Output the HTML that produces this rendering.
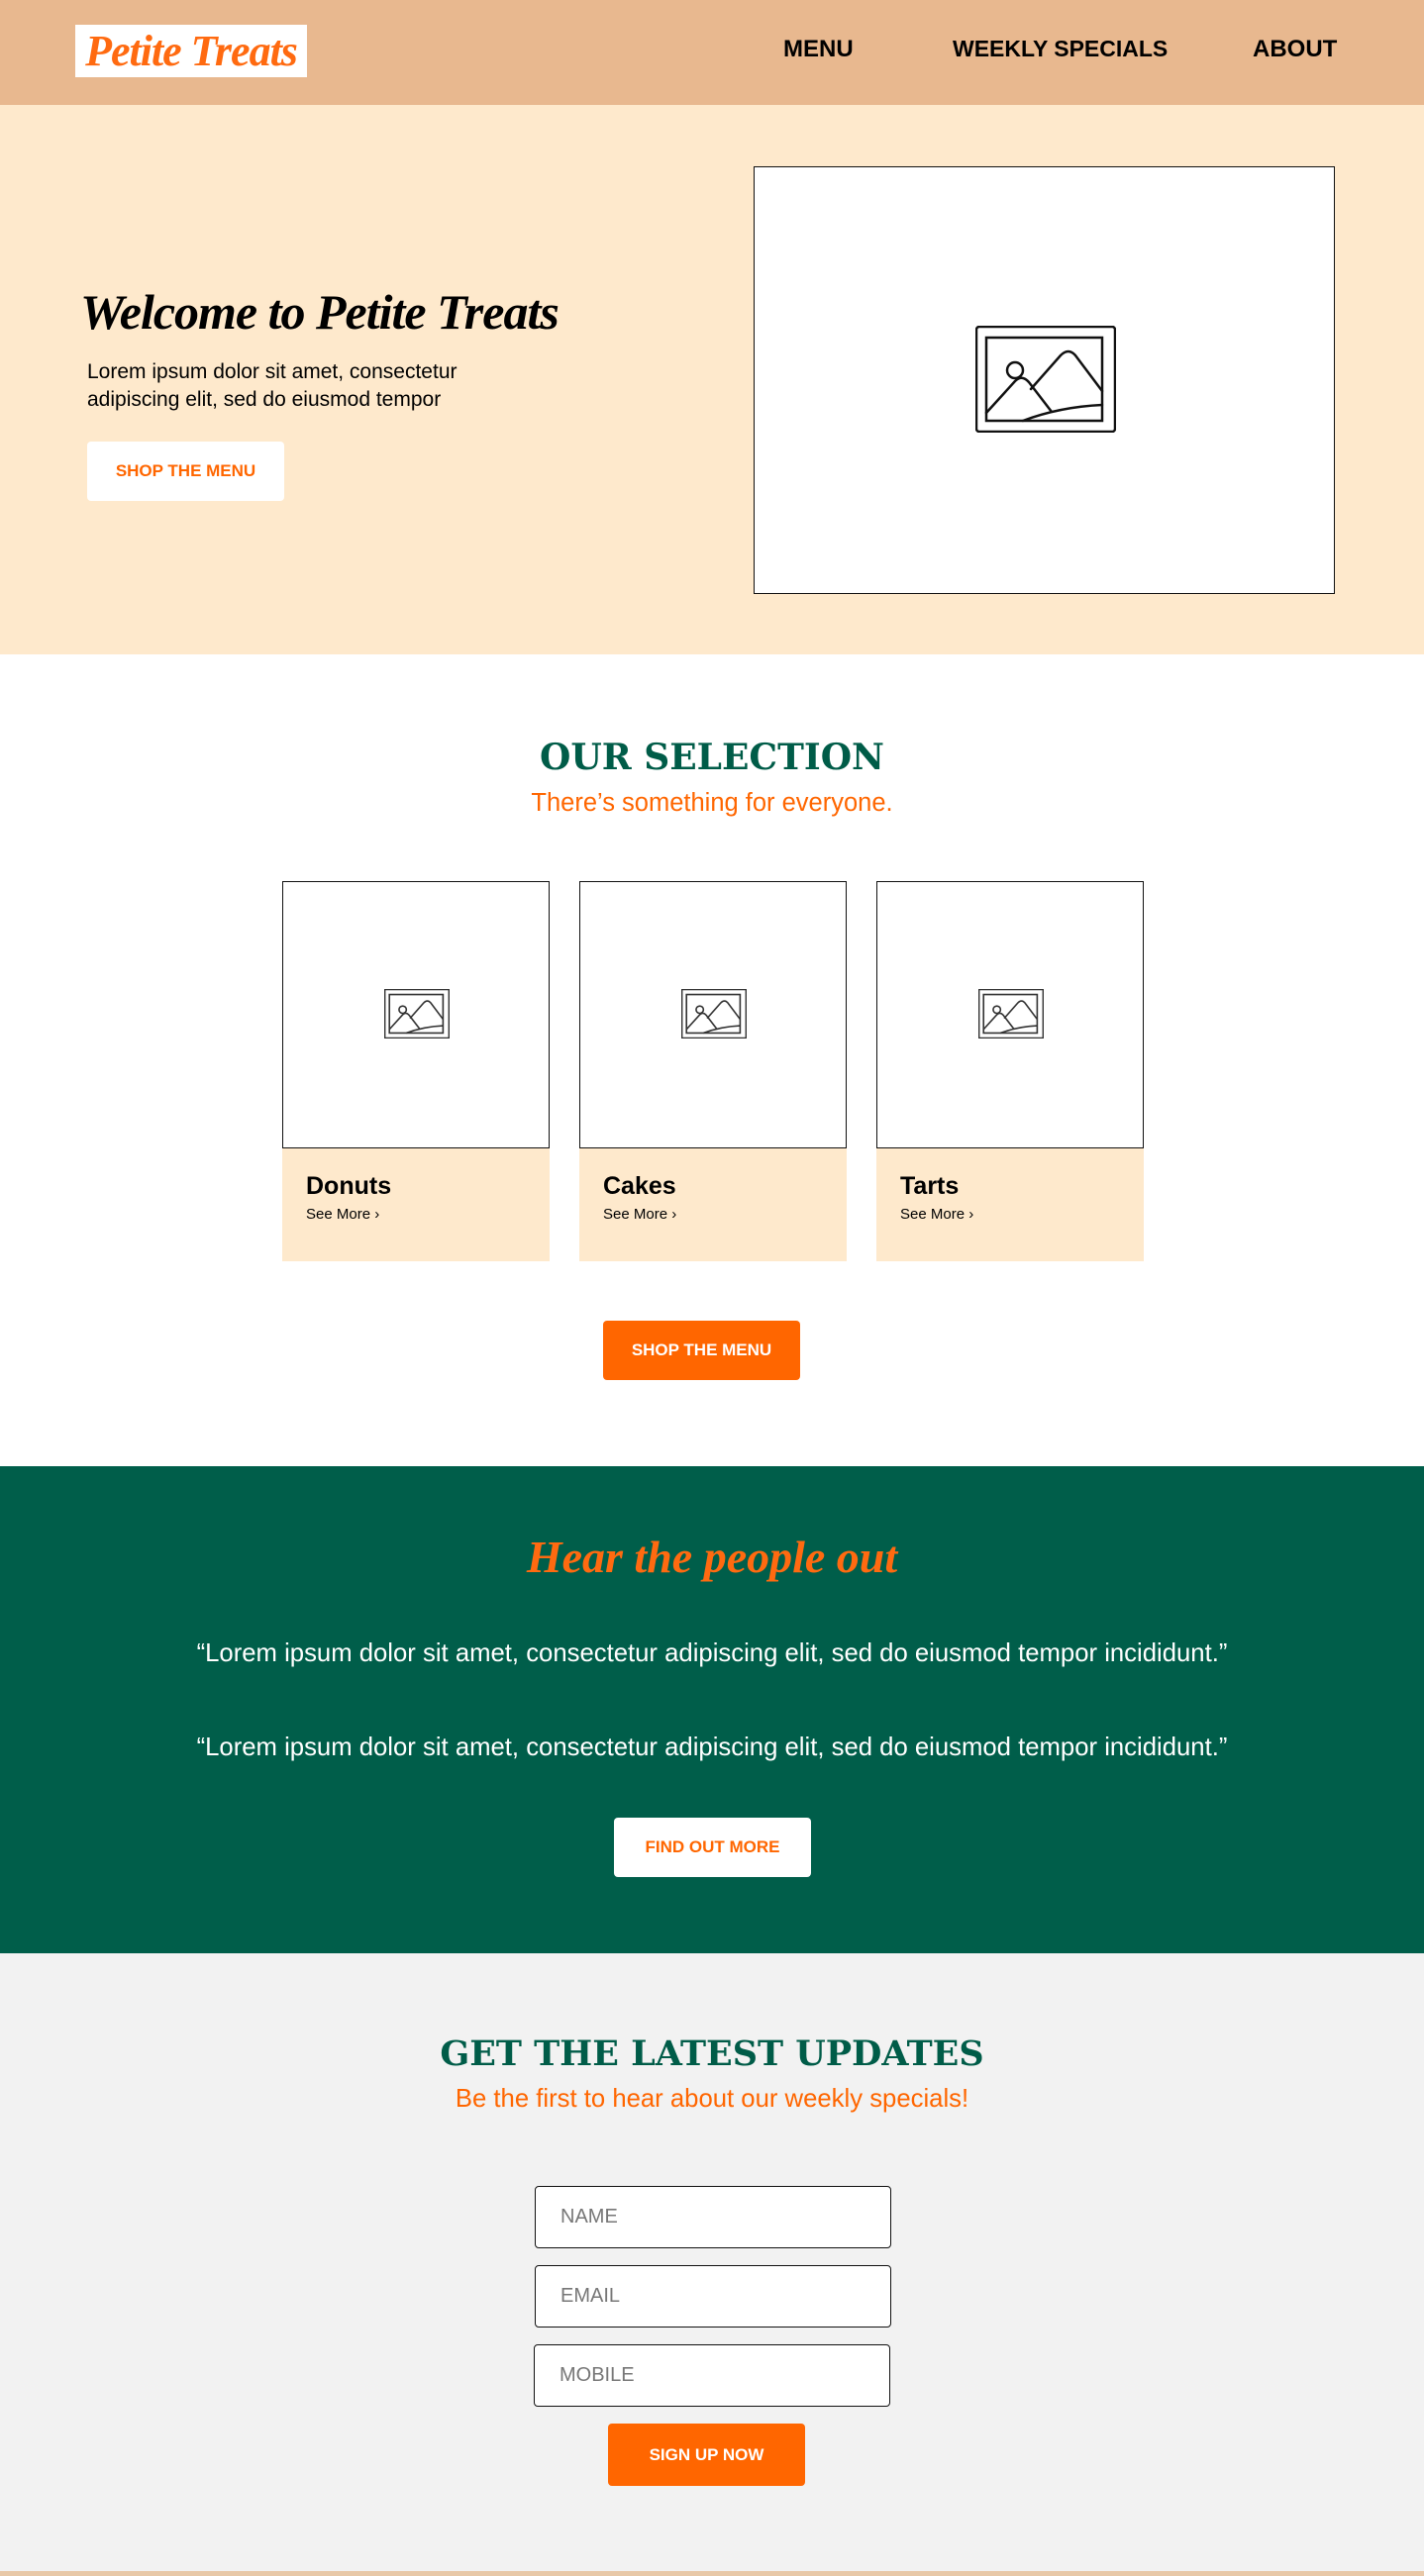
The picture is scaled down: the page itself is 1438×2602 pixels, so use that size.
<!DOCTYPE html>
<html><head><meta charset="utf-8"><style>
*{margin:0;padding:0;box-sizing:border-box}
body{width:1438px;height:2602px;font-family:"Liberation Sans",sans-serif;background:#f2f2f2;position:relative;overflow:hidden}
.a{position:absolute}
.script{font-family:"Liberation Serif",serif;font-style:italic;font-weight:bold}
.slab{font-family:"DejaVu Serif","Liberation Serif",serif;font-weight:bold;color:#005c48;text-align:center;left:0;width:1438px}
.c{text-align:center;left:0;width:1438px}
.btn{position:absolute;border-radius:4px;font-weight:bold;font-size:17px;display:flex;align-items:center;justify-content:center}
.inp{position:absolute;left:540px;width:360px;height:63px;background:#fff;border:1.5px solid #111;border-radius:4px;color:#777;font-size:20px;padding-left:25px;display:flex;align-items:center}
</style></head><body>
<div class="a" style="left:0;top:0;width:1438px;height:106px;background:#e8b88f"></div>
<div class="a script" style="left:76px;top:25px;width:234px;height:53px;background:#fff;color:#ff6a10;font-size:44px;line-height:53px;text-align:center;letter-spacing:-1px">Petite Treats</div>
<div class="a" style="left:791px;top:36px;font-size:24px;font-weight:bold">MENU</div>
<div class="a" style="left:962px;top:36px;font-size:23px;font-weight:bold">WEEKLY SPECIALS</div>
<div class="a" style="left:1265px;top:36px;font-size:24px;font-weight:bold">ABOUT</div>

<div class="a" style="left:0;top:106px;width:1438px;height:555px;background:#fee9cc"></div>
<div class="a script" style="left:81px;top:286px;font-size:50px;letter-spacing:-1px">Welcome to Petite Treats</div>
<div class="a" style="left:88px;top:362px;font-size:21px;line-height:28px">Lorem ipsum dolor sit amet, consectetur<br>adipiscing elit, sed do eiusmod tempor</div>
<div class="btn" style="left:88px;top:446px;width:199px;height:60px;background:#fff;color:#ff6600">SHOP THE MENU</div>
<div class="a" style="left:761px;top:168px;width:587px;height:432px;background:#fff;border:1.5px solid #111"></div>
<svg class="a" style="left:985px;top:329px" width="142" height="108" viewBox="0 0 142 108" fill="none" stroke="#111" stroke-width="2.5" stroke-linecap="round"><rect x="1" y="1" width="140" height="106" rx="3"/><rect x="11" y="12" width="117" height="84"/><circle cx="40" cy="45" r="8"/><path d="M11 88 L40 56 Q47 49 54 57 L77 87 M56 64 L86 30 Q94 22 101 30 L128 66 M48 96 Q85 82 128 80"/></svg>

<div class="a" style="left:0;top:661px;width:1438px;height:820px;background:#fff"></div>
<div class="a slab" style="top:744px;font-size:36px">OUR SELECTION</div>
<div class="a c" style="top:797px;font-size:25.5px;color:#ff6600">There’s something for everyone.</div>

<div class="a" style="left:285px;top:1159px;width:270px;height:115px;background:#fee9cc"></div>
<div class="a" style="left:585px;top:1159px;width:270px;height:115px;background:#fee9cc"></div>
<div class="a" style="left:885px;top:1159px;width:270px;height:115px;background:#fee9cc"></div>
<div class="a" style="left:285px;top:890px;width:270px;height:270px;border:1.5px solid #111;background:#fff"></div>
<div class="a" style="left:585px;top:890px;width:270px;height:270px;border:1.5px solid #111;background:#fff"></div>
<div class="a" style="left:885px;top:890px;width:270px;height:270px;border:1.5px solid #111;background:#fff"></div>
<svg class="a" style="left:388px;top:999px" width="66" height="50" viewBox="0 0 142 108" fill="none" stroke="#333" stroke-width="3.5"><rect x="1" y="1" width="140" height="106"/><rect x="11" y="12" width="117" height="84"/><circle cx="40" cy="45" r="8"/><path d="M11 88 L40 56 Q47 49 54 57 L77 87 M56 64 L86 30 Q94 22 101 30 L128 66 M48 96 Q85 82 128 80"/></svg>
<svg class="a" style="left:688px;top:999px" width="66" height="50" viewBox="0 0 142 108" fill="none" stroke="#333" stroke-width="3.5"><rect x="1" y="1" width="140" height="106"/><rect x="11" y="12" width="117" height="84"/><circle cx="40" cy="45" r="8"/><path d="M11 88 L40 56 Q47 49 54 57 L77 87 M56 64 L86 30 Q94 22 101 30 L128 66 M48 96 Q85 82 128 80"/></svg>
<svg class="a" style="left:988px;top:999px" width="66" height="50" viewBox="0 0 142 108" fill="none" stroke="#333" stroke-width="3.5"><rect x="1" y="1" width="140" height="106"/><rect x="11" y="12" width="117" height="84"/><circle cx="40" cy="45" r="8"/><path d="M11 88 L40 56 Q47 49 54 57 L77 87 M56 64 L86 30 Q94 22 101 30 L128 66 M48 96 Q85 82 128 80"/></svg>
<div class="a" style="left:309px;top:1184px;font-size:25px;font-weight:bold">Donuts</div>
<div class="a" style="left:309px;top:1218px;font-size:15px">See More ›</div>
<div class="a" style="left:609px;top:1184px;font-size:25px;font-weight:bold">Cakes</div>
<div class="a" style="left:609px;top:1218px;font-size:15px">See More ›</div>
<div class="a" style="left:909px;top:1184px;font-size:25px;font-weight:bold">Tarts</div>
<div class="a" style="left:909px;top:1218px;font-size:15px">See More ›</div>
<div class="btn" style="left:609px;top:1334px;width:199px;height:60px;background:#ff6600;color:#fff">SHOP THE MENU</div>

<div class="a" style="left:0;top:1481px;width:1438px;height:492px;background:#005e4a"></div>
<div class="a c script" style="top:1546px;font-size:46px;color:#ff6a10">Hear the people out</div>
<div class="a c" style="top:1656px;font-size:25.7px;color:#fff">“Lorem ipsum dolor sit amet, consectetur adipiscing elit, sed do eiusmod tempor incididunt.”</div>
<div class="a c" style="top:1751px;font-size:25.7px;color:#fff">“Lorem ipsum dolor sit amet, consectetur adipiscing elit, sed do eiusmod tempor incididunt.”</div>
<div class="btn" style="left:620px;top:1836px;width:199px;height:60px;background:#fff;color:#ff6600">FIND OUT MORE</div>

<div class="a slab" style="top:2054px;font-size:35px">GET THE LATEST UPDATES</div>
<div class="a c" style="top:2106px;font-size:25.7px;color:#ff6600">Be the first to hear about our weekly specials!</div>
<div class="inp" style="top:2208px">NAME</div>
<div class="inp" style="top:2288px">EMAIL</div>
<div class="inp" style="top:2368px;left:539px">MOBILE</div>
<div class="btn" style="left:614px;top:2448px;width:199px;height:63px;background:#ff6600;color:#fff">SIGN UP NOW</div>
<div class="a" style="left:0;top:2597px;width:1438px;height:5px;background:#e8c8a8"></div>
</body></html>
